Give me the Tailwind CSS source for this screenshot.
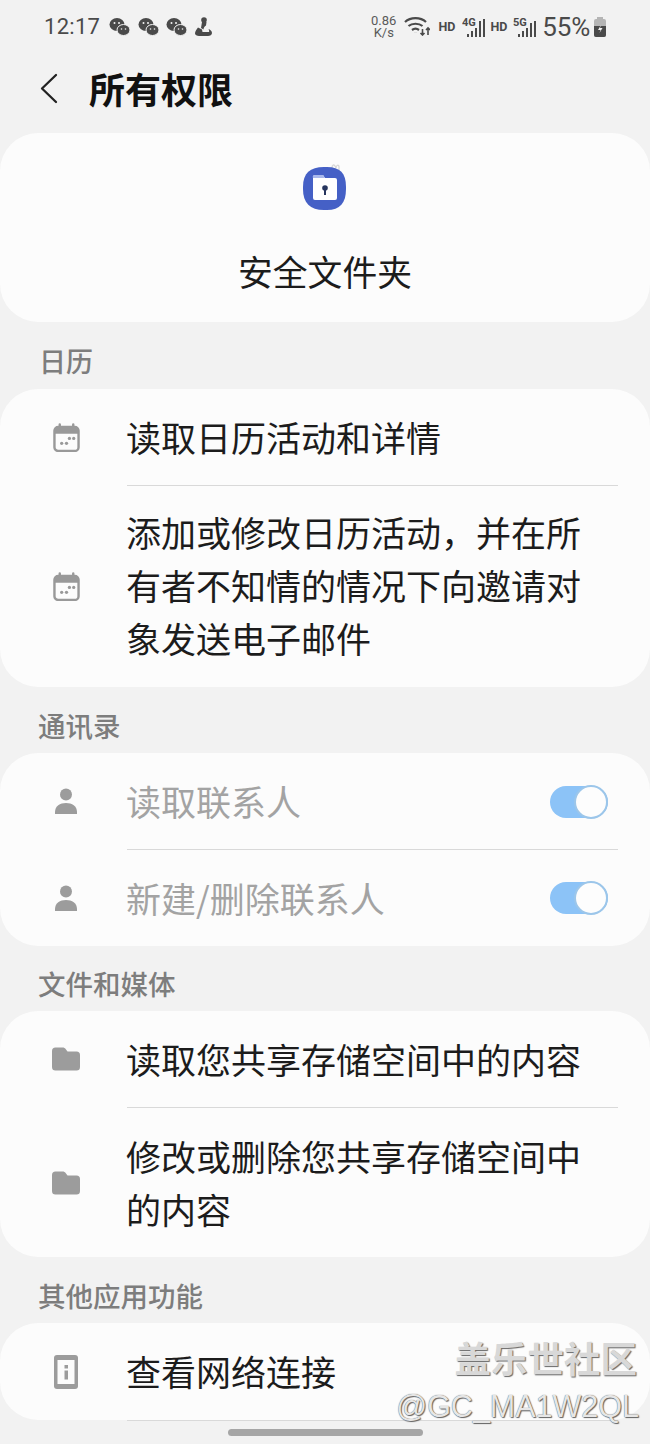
<!DOCTYPE html>
<html lang="zh">
<head>
  <meta charset="UTF-8" />
  <meta name="viewport" content="width=device-width, initial-scale=1.0"/>
  <title>所有权限</title>
  <script src="https://cdn.jsdelivr.net/npm/@tailwindcss/browser@4"></script>
</head>
<body class="bg-[#f2f2f2] font-['Noto_Sans_CJK_SC','Noto_Sans',sans-serif]">
  <div class="relative w-[650px] h-[1444px] overflow-hidden">

    <!-- status bar -->
    <div class="h-[54px] pl-[44px] pr-[43px] flex items-center justify-between text-[#4a4a4a]">
      <div class="flex items-center">
        <span class="font-['Roboto'] text-[22px] leading-none tracking-[0.3px] mr-[9px]">12:17</span>
        <div class="flex gap-[7.5px] items-center">
          <svg class="w-[21px] h-[20px]" viewBox="0 0 21 20" fill="#4a4a4a"><ellipse cx="8" cy="7.5" rx="7.5" ry="6.5"/><ellipse cx="14.5" cy="13" rx="6.5" ry="5.5" stroke="#f2f2f2" stroke-width="1"/><circle cx="5.5" cy="6" r="1" fill="#f2f2f2"/><circle cx="10" cy="6" r="1" fill="#f2f2f2"/><circle cx="12.5" cy="12" r=".8" fill="#f2f2f2"/><circle cx="16.5" cy="12" r=".8" fill="#f2f2f2"/></svg>
          <svg class="w-[21px] h-[20px]" viewBox="0 0 21 20" fill="#4a4a4a"><ellipse cx="8" cy="7.5" rx="7.5" ry="6.5"/><ellipse cx="14.5" cy="13" rx="6.5" ry="5.5" stroke="#f2f2f2" stroke-width="1"/><circle cx="5.5" cy="6" r="1" fill="#f2f2f2"/><circle cx="10" cy="6" r="1" fill="#f2f2f2"/><circle cx="12.5" cy="12" r=".8" fill="#f2f2f2"/><circle cx="16.5" cy="12" r=".8" fill="#f2f2f2"/></svg>
          <svg class="w-[21px] h-[20px]" viewBox="0 0 21 20" fill="#4a4a4a"><ellipse cx="8" cy="7.5" rx="7.5" ry="6.5"/><ellipse cx="14.5" cy="13" rx="6.5" ry="5.5" stroke="#f2f2f2" stroke-width="1"/><circle cx="5.5" cy="6" r="1" fill="#f2f2f2"/><circle cx="10" cy="6" r="1" fill="#f2f2f2"/><circle cx="12.5" cy="12" r=".8" fill="#f2f2f2"/><circle cx="16.5" cy="12" r=".8" fill="#f2f2f2"/></svg>
          <svg class="w-[17px] h-[20px]" viewBox="0 0 17 20" fill="#4a4a4a"><circle cx="9" cy="3" r="2.800"/><path d="M7 5h4.500l-.5 3.500c-1.500 1-2.500 2.500-2.500 4L6 11z"/><path d="M3 10.500l4 2 .5 2.500H14c.5-1 0-2-.5-3 1.500.5 3.500 2 3.500 4 0 2-2 3-4 3H4c-2 0-4-1-4-2.500 0-2 1.500-4 3-6z"/></svg>
        </div>
      </div>
      <div class="flex items-center">
        <div class="font-['Roboto'] text-[13px] leading-[12px] text-center text-[#5a5a5a] mr-[8px]"><div>0.86</div><div>K/s</div></div>
        <svg class="w-[26px] h-[20px] mr-[8px] -mt-[2px]" viewBox="0 0 26 20" fill="none" stroke="#4a4a4a" stroke-width="2.200"><path d="M1 6C6.500.8 16.500.8 22 6"/><path d="M4.500 10c3.500-3 10.500-3 14 0"/><path d="M8 14c2-1.500 5-1.500 7 0"/><path d="M11.500 16.500v.1" stroke-width="3"/><path d="M18.500 13v6M16.500 17l2 2 2-2M24 19v-7M22 14l2-2 2 2" stroke-width="1.600"/></svg>
        <span class="font-['Roboto'] font-bold text-[12.500px] leading-none mr-[7px]">HD</span>
        <svg class="w-[23px] h-[22px] mr-[5px]" viewBox="0 0 23 22" fill="#4a4a4a"><text x="0" y="9.500" font-family="Roboto" font-weight="700" font-size="11">4G</text><rect x="5" y="18" width="2" height="3"/><rect x="9" y="15" width="2" height="6"/><rect x="13" y="12" width="2" height="9"/><rect x="17" y="5" width="2" height="16"/><rect x="21" y="3" width="2" height="18"/></svg>
        <span class="font-['Roboto'] font-bold text-[12.500px] leading-none mr-[6px]">HD</span>
        <svg class="w-[23px] h-[22px] mr-[6px]" viewBox="0 0 23 22" fill="#4a4a4a"><text x="0" y="9.500" font-family="Roboto" font-weight="700" font-size="11">5G</text><rect x="5" y="18" width="2" height="3"/><rect x="9" y="15" width="2" height="6"/><rect x="13" y="12" width="2" height="9"/><rect x="17" y="7" width="2" height="14"/><rect x="21" y="5" width="2" height="16"/></svg>
        <span class="font-['Roboto'] text-[26px] leading-none tracking-[-0.200px] mr-[3px]">55%</span>
        <svg class="w-[14px] h-[20px]" viewBox="0 0 14 20"><rect x="4" y="0" width="6" height="3" fill="#b5b5b5"/><rect x="1" y="2" width="12" height="18" rx="2" fill="#b5b5b5"/><path d="M1 9h12v9a2 2 0 0 1-2 2H3a2 2 0 0 1-2-2z" fill="#4a4a4a"/><path d="M8 8l-3 5h2.500l-1 3 3-5H7z" fill="#f2f2f2"/></svg>
      </div>
    </div>

    <!-- header -->
    <div class="h-[79px] flex items-center">
      <svg class="w-[18px] h-[32px] ml-[40px] mt-[-11px]" viewBox="0 0 18 32" fill="none" stroke="#222" stroke-width="2.300" stroke-linecap="round" stroke-linejoin="round"><path d="M16 3L2 16.500 16 30"/></svg>
      <h1 class="ml-[31px] mt-[-11px] text-[36px] font-bold leading-none text-[#111]">所有权限</h1>
    </div>

    <!-- app card -->
    <div class="h-[189px] bg-[#fcfcfc] rounded-[38px] flex flex-col items-center">
      <svg class="w-[46px] h-[50px] mt-[29px]" viewBox="0 0 46 50">
        <path d="M30 6c0-3 2-4 3-2l1 2c0-3 3-4 3-1l0 5" fill="none" stroke="#d8d8d8" stroke-width="1.300"/>
        <path d="M22 5h3C38 5 44 11 44 25v2C44 41 38 48 25 48h-3C8 48 1 41 1 27v-2C1 11 8 5 22 5z" fill="#4560c6"/>
        <path d="M11 15a2 2 0 0 1 2-2h8l2 3h10a2 2 0 0 1 2 2v18a2 2 0 0 1-2 2H13a2 2 0 0 1-2-2z" fill="#fff"/>
        <path d="M11 16a2 2 0 0 1 2-3h8l2 3z" fill="#a9b8ec"/>
        <circle cx="23" cy="26" r="2.800" fill="#27365f"/>
        <rect x="22" y="27" width="2" height="6" fill="#27365f"/>
      </svg>
      <div class="mt-[37px] text-[34.8px] leading-[44px] text-[#1c1c1c]">安全文件夹</div>
    </div>

    <!-- 日历 -->
    <h2 class="pl-[39px] h-[67px] pt-[23px] text-[27px] leading-[32px] font-medium text-[#7d7d7d]">日历</h2>
    <div class="bg-[#fcfcfc] rounded-[38px] h-[298px] flex flex-col">
      <div class="h-[96px] flex items-center">
        <div class="w-[126px] flex justify-center pl-[6px]">
          <svg class="w-[27px] h-[29px]" viewBox="0 0 28 30"><path d="M7 1.500v4M21 1.500v4" stroke="#999" stroke-width="2.500" stroke-linecap="round"/><rect x="1.500" y="4" width="25" height="25" rx="4" fill="#fcfcfc" stroke="#999" stroke-width="2.500"/><path d="M1.500 8a4 4 0 0 1 4-4h17a4 4 0 0 1 4 4v3h-25z" fill="#999"/><circle cx="9" cy="21" r="1.700" fill="#999"/><circle cx="14" cy="21" r="1.700" fill="#999"/><circle cx="17" cy="16" r="1.700" fill="#999"/><circle cx="21.500" cy="16" r="1.700" fill="#999"/></svg>
        </div>
        <span class="mb-[2px] text-[35px] leading-[53px] text-[#1c1c1c]">读取日历活动和详情</span>
      </div>
      <div class="ml-[127px] mr-[32px] h-[1px] bg-[#d9d9d9]"></div>
      <div class="flex-1 flex items-center">
        <div class="w-[126px] flex justify-center pl-[6px]">
          <svg class="w-[27px] h-[29px]" viewBox="0 0 28 30"><path d="M7 1.500v4M21 1.500v4" stroke="#999" stroke-width="2.500" stroke-linecap="round"/><rect x="1.500" y="4" width="25" height="25" rx="4" fill="#fcfcfc" stroke="#999" stroke-width="2.500"/><path d="M1.500 8a4 4 0 0 1 4-4h17a4 4 0 0 1 4 4v3h-25z" fill="#999"/><circle cx="9" cy="21" r="1.700" fill="#999"/><circle cx="14" cy="21" r="1.700" fill="#999"/><circle cx="17" cy="16" r="1.700" fill="#999"/><circle cx="21.500" cy="16" r="1.700" fill="#999"/></svg>
        </div>
        <span class="w-[470px] mb-[4px] text-[35px] leading-[53px] text-[#1c1c1c]">添加或修改日历活动，并在所有者不知情的情况下向邀请对象发送电子邮件</span>
      </div>
    </div>

    <!-- 通讯录 -->
    <h2 class="pl-[38px] h-[66px] pt-[22px] text-[27.500px] leading-[32px] font-medium text-[#7d7d7d]">通讯录</h2>
    <div class="bg-[#fcfcfc] rounded-[38px] h-[193px] flex flex-col">
      <div class="h-[96px] flex items-center">
        <div class="w-[126px] flex justify-center pl-[6px]">
          <svg class="w-[24px] h-[26px]" viewBox="0 0 24 26" fill="#9c9c9c"><circle cx="12" cy="6.500" r="6"/><path d="M1 26v-2c0-6 5-9 11-9s11 3 11 9v2z"/></svg>
        </div>
        <span class="flex-1 mb-[2px] text-[35px] leading-[53px] text-[#a3a3a3]">读取联系人</span>
        <div class="relative w-[58px] h-[32px] rounded-full bg-[#8cc3f7] mr-[42px] mt-[2px]">
          <div class="absolute right-0 top-[-1px] w-[34px] h-[34px] rounded-full bg-[#fdfdfd] border-2 border-[#9cc6ea]"></div>
        </div>
      </div>
      <div class="ml-[127px] mr-[32px] h-[1px] bg-[#d9d9d9]"></div>
      <div class="flex-1 flex items-center">
        <div class="w-[126px] flex justify-center pl-[6px]">
          <svg class="w-[24px] h-[26px]" viewBox="0 0 24 26" fill="#9c9c9c"><circle cx="12" cy="6.500" r="6"/><path d="M1 26v-2c0-6 5-9 11-9s11 3 11 9v2z"/></svg>
        </div>
        <span class="flex-1 mb-[2px] text-[35px] leading-[53px] text-[#a3a3a3]">新建/删除联系人</span>
        <div class="relative w-[58px] h-[32px] rounded-full bg-[#8cc3f7] mr-[42px]">
          <div class="absolute right-0 top-[-1px] w-[34px] h-[34px] rounded-full bg-[#fdfdfd] border-2 border-[#9cc6ea]"></div>
        </div>
      </div>
    </div>

    <!-- 文件和媒体 -->
    <h2 class="pl-[38px] h-[65px] pt-[21px] text-[27.500px] leading-[32px] font-medium text-[#7d7d7d]">文件和媒体</h2>
    <div class="bg-[#fcfcfc] rounded-[38px] h-[246px] flex flex-col">
      <div class="h-[96px] flex items-center">
        <div class="w-[126px] flex justify-center pl-[6px]">
          <svg class="w-[28px] h-[24px]" viewBox="0 0 28 24" fill="#9c9c9c"><path d="M0 4a3.500 3.500 0 0 1 3.500-3.500h7c1.500 0 2.500.5 3.500 2l1.500 2H24.500A3.500 3.500 0 0 1 28 8v12a3.500 3.500 0 0 1-3.500 3.500h-21A3.500 3.500 0 0 1 0 20z"/></svg>
        </div>
        <span class="mb-[2px] text-[35px] leading-[53px] text-[#1c1c1c]">读取您共享存储空间中的内容</span>
      </div>
      <div class="ml-[127px] mr-[32px] h-[1px] bg-[#d9d9d9]"></div>
      <div class="flex-1 flex items-center">
        <div class="w-[126px] flex justify-center pl-[6px]">
          <svg class="w-[28px] h-[24px]" viewBox="0 0 28 24" fill="#9c9c9c"><path d="M0 4a3.500 3.500 0 0 1 3.500-3.500h7c1.500 0 2.500.5 3.500 2l1.500 2H24.500A3.500 3.500 0 0 1 28 8v12a3.500 3.500 0 0 1-3.500 3.500h-21A3.500 3.500 0 0 1 0 20z"/></svg>
        </div>
        <span class="w-[470px] mb-[2px] text-[35px] leading-[53px] text-[#1c1c1c]">修改或删除您共享存储空间中的内容</span>
      </div>
    </div>

    <!-- 其他应用功能 -->
    <h2 class="pl-[38px] h-[66px] pt-[22px] text-[27.500px] leading-[32px] font-medium text-[#7d7d7d]">其他应用功能</h2>
    <div class="bg-[#fcfcfc] rounded-[38px] h-[97px] flex items-center">
      <div class="w-[126px] flex justify-center pl-[6px]">
        <svg class="w-[24px] h-[34px]" viewBox="0 0 24 34"><rect x="0" y="0" width="24" height="34" rx="3" fill="#9c9c9c"/><rect x="3.500" y="5" width="17" height="24" fill="#fcfcfc"/><rect x="10.500" y="10" width="3.500" height="3.500" fill="#9c9c9c"/><rect x="10.500" y="15.500" width="3.500" height="9" fill="#9c9c9c"/></svg>
      </div>
      <span class="mb-[2px] text-[35px] leading-[53px] text-[#1c1c1c]">查看网络连接</span>
    </div>
    <div class="ml-[127px] mr-[32px] h-[1px] bg-[#d9d9d9]"></div>

    <!-- watermark -->
    <div class="absolute right-[13px] top-[1336px] text-[36.500px] leading-[44px] font-bold text-[#d8d8d8] [text-shadow:1px_1px_1px_#666]">盖乐世社区</div>
    <div class="absolute right-[11px] top-[1388px] font-['Liberation_Sans'] text-[30.500px] leading-[36px] text-[#e6e6e6] [text-shadow:0_0_1px_#444,1px_1px_1px_#666]">@GC_MA1W2QL</div>

    <!-- home indicator -->
    <div class="absolute left-[228px] top-[1429px] w-[195px] h-[7px] rounded-full bg-[#a6a6a6]"></div>
  </div>
</body>
</html>
